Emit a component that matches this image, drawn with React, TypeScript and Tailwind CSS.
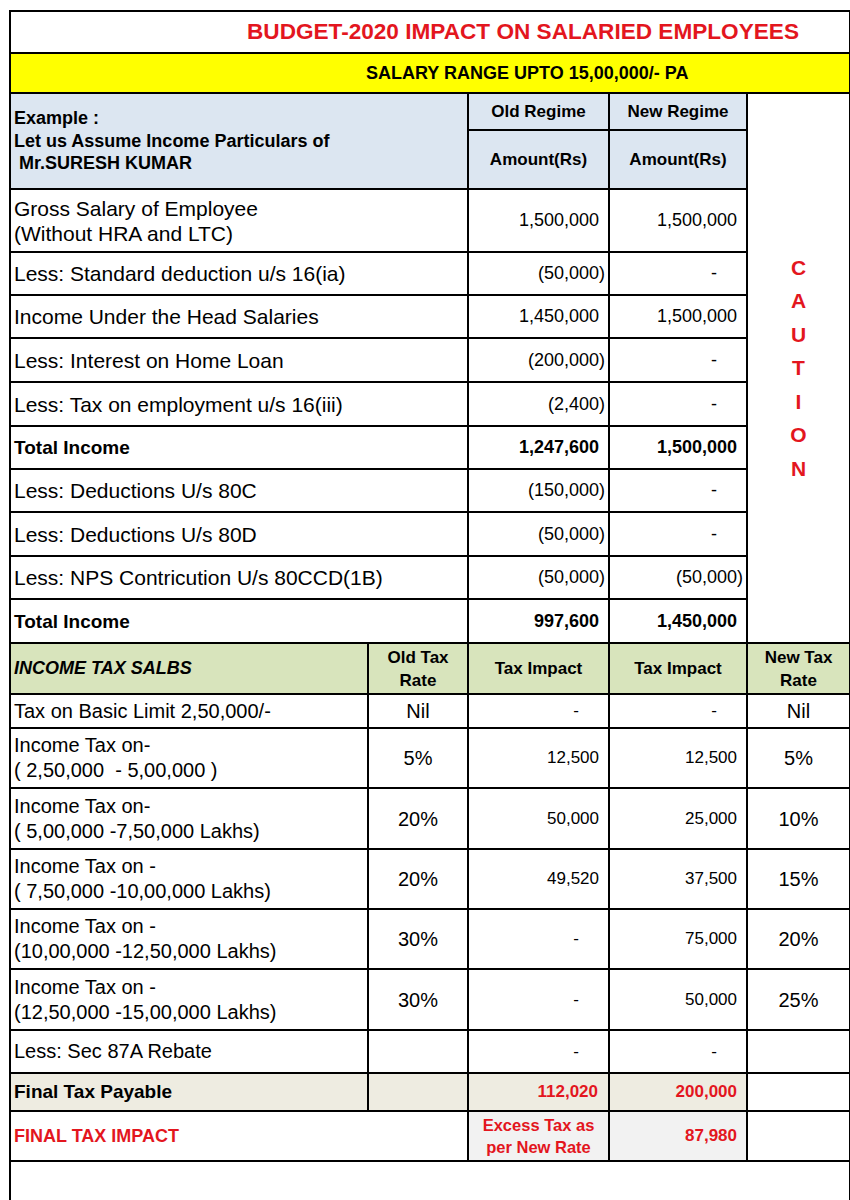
import React from "react";

const RED = "text-[#e3161e]";
const BD = "border-2 border-black";

function Acc({ v, pr = "pr-[9px]", size = "text-[18px]", bold = false, red = false }: { v: string; pr?: string; size?: string; bold?: boolean; red?: boolean }) {
  let content: React.ReactNode;
  if (v === "-") {
    content = <span className="mr-[20px]">-</span>;
  } else if (v.startsWith("(")) {
    content = (
      <>
        {v.slice(0, -1)}
        <span className="inline-block w-0">)</span>
      </>
    );
  } else {
    content = v;
  }
  return (
    <td className={`${BD} text-right align-middle ${pr} ${size} ${bold ? "font-bold" : ""} ${red ? RED : ""} whitespace-nowrap`}>
      {content}
    </td>
  );
}

const sec1 = [
  { label: ["Gross Salary of Employee", "(Without HRA and LTC)"], o: "1,500,000", n: "1,500,000", h: "h-[63px]" },
  { label: ["Less: Standard deduction u/s 16(ia)"], o: "(50,000)", n: "-", h: "h-[43px]" },
  { label: ["Income Under the Head Salaries"], o: "1,450,000", n: "1,500,000", h: "h-[43px]" },
  { label: ["Less: Interest on Home Loan"], o: "(200,000)", n: "-", h: "h-[44px]" },
  { label: ["Less: Tax on employment u/s 16(iii)"], o: "(2,400)", n: "-", h: "h-[44px]" },
  { label: ["Total Income"], o: "1,247,600", n: "1,500,000", bold: true, h: "h-[43px]" },
  { label: ["Less: Deductions U/s 80C"], o: "(150,000)", n: "-", h: "h-[43px]" },
  { label: ["Less: Deductions U/s 80D"], o: "(50,000)", n: "-", h: "h-[44px]" },
  { label: ["Less: NPS Contricution U/s 80CCD(1B)"], o: "(50,000)", n: "(50,000)", h: "h-[43px]" },
  { label: ["Total Income"], o: "997,600", n: "1,450,000", bold: true, h: "h-[44px]" },
];

const sec2 = [
  { label: ["Tax on Basic Limit 2,50,000/-"], old: "Nil", a: "-", b: "-", nw: "Nil", h: "h-[34px]" },
  { label: ["Income Tax on-", "( 2,50,000  - 5,00,000 )"], old: "5%", a: "12,500", b: "12,500", nw: "5%", h: "h-[60px]" },
  { label: ["Income Tax on-", "( 5,00,000 -7,50,000 Lakhs)"], old: "20%", a: "50,000", b: "25,000", nw: "10%", h: "h-[61px]" },
  { label: ["Income Tax on -", "( 7,50,000 -10,00,000 Lakhs)"], old: "20%", a: "49,520", b: "37,500", nw: "15%", h: "h-[60px]" },
  { label: ["Income Tax on -", "(10,00,000 -12,50,000 Lakhs)"], old: "30%", a: "-", b: "75,000", nw: "20%", h: "h-[60px]" },
  { label: ["Income Tax on -", "(12,50,000 -15,00,000 Lakhs)"], old: "30%", a: "-", b: "50,000", nw: "25%", h: "h-[61px]" },
  { label: ["Less: Sec 87A Rebate"], old: "", a: "-", b: "-", nw: "", h: "h-[43px]" },
];

export default function App() {
  return (
    <div className="min-h-[1200px] bg-white pl-[9px] pt-[10px] font-['Liberation_Sans',Arial,sans-serif] text-black">
      <table className="table-fixed border-collapse w-[840px]">
        <colgroup>
          <col className="w-[358px]" />
          <col className="w-[100px]" />
          <col className="w-[141px]" />
          <col className="w-[138px]" />
          <col className="w-[103px]" />
        </colgroup>
        <tbody>
          <tr className="h-[42px]">
            <td colSpan={5} className={`${BD} pl-[236px] text-[22.6px] font-bold ${RED} leading-none whitespace-nowrap`}>
              BUDGET-2020 IMPACT ON SALARIED EMPLOYEES
            </td>
          </tr>
          <tr className="h-[40px]">
            <td colSpan={5} className={`${BD} bg-[#ffff00] pl-[355px] text-[18px] font-bold leading-none whitespace-nowrap`}>
              SALARY RANGE UPTO 15,00,000/- PA
            </td>
          </tr>
          <tr className="h-[37px]">
            <td colSpan={2} rowSpan={2} className={`${BD} bg-[#dce6f1] pl-[3px] text-[18px] font-bold leading-[22.5px] align-middle`}>
              <div>Example :</div>
              <div>Let us Assume Income Particulars of</div>
              <div className="pl-[5px]">Mr.SURESH KUMAR</div>
            </td>
            <td className={`${BD} bg-[#dce6f1] text-center text-[17px] font-bold`}>Old Regime</td>
            <td className={`${BD} bg-[#dce6f1] text-center text-[17px] font-bold`}>New Regime</td>
            <td rowSpan={12} className={`${BD} text-center align-middle`}>
              <div className={`flex flex-col items-center text-[21px] font-bold leading-[33.4px] ${RED}`}>
                {["C", "A", "U", "T", "I", "O", "N"].map((c) => (
                  <div key={c}>{c}</div>
                ))}
              </div>
            </td>
          </tr>
          <tr className="h-[59px]">
            <td className={`${BD} bg-[#dce6f1] text-center text-[17px] font-bold`}>Amount(Rs)</td>
            <td className={`${BD} bg-[#dce6f1] text-center text-[17px] font-bold`}>Amount(Rs)</td>
          </tr>
          {sec1.map((r, i) => (
            <tr key={i} className={r.h}>
              <td colSpan={2} className={`${BD} pl-[3px] align-middle ${r.bold ? "text-[19px] font-bold" : "text-[21px]"} leading-[25px] whitespace-nowrap`}>
                {r.label.map((l) => (
                  <div key={l}>{l}</div>
                ))}
              </td>
              <Acc v={r.o} bold={r.bold} />
              <Acc v={r.n} bold={r.bold} />
            </tr>
          ))}
          <tr className="h-[51px] bg-[#d8e4bc]">
            <td className={`${BD} pl-[3px] text-[18px] font-bold italic`}>INCOME TAX SALBS</td>
            <td className={`${BD} text-center text-[17px] font-bold leading-[23px]`}>
              <div>Old Tax</div>
              <div>Rate</div>
            </td>
            <td className={`${BD} text-center text-[17px] font-bold`}>Tax Impact</td>
            <td className={`${BD} text-center text-[17px] font-bold`}>Tax Impact</td>
            <td className={`${BD} text-center text-[17px] font-bold leading-[23px]`}>
              <div>New Tax</div>
              <div>Rate</div>
            </td>
          </tr>
          {sec2.map((r, i) => (
            <tr key={i} className={r.h}>
              <td className={`${BD} pl-[3px] align-middle text-[20px] leading-[25px] whitespace-pre`}>
                {r.label.map((l) => (
                  <div key={l}>{l}</div>
                ))}
              </td>
              <td className={`${BD} text-center text-[20px]`}>{r.old}</td>
              <Acc v={r.a} size="text-[17px]" />
              <Acc v={r.b} size="text-[17px]" />
              <td className={`${BD} text-center text-[20px]`}>{r.nw}</td>
            </tr>
          ))}
          <tr className="h-[38px]">
            <td className={`${BD} bg-[#eeece1] pl-[3px] text-[19px] font-bold`}>Final Tax Payable</td>
            <td className={`${BD} bg-[#eeece1]`}></td>
            <Acc v="112,020" size="text-[17px]" bold red pr="pr-[10px] bg-[#eeece1]" />
            <Acc v="200,000" size="text-[17px]" bold red pr="pr-[9px] bg-[#eeece1]" />
            <td className={`${BD}`}></td>
          </tr>
          <tr className="h-[50px]">
            <td colSpan={2} className={`${BD} pl-[3px] text-[18px] font-bold ${RED}`}>FINAL TAX IMPACT</td>
            <td className={`${BD} bg-[#f2f2f2] text-center text-[16.5px] font-bold leading-[22px] ${RED}`}>
              <div>Excess Tax as</div>
              <div>per New Rate</div>
            </td>
            <Acc v="87,980" size="text-[17px]" bold red pr="pr-[9px] bg-[#f2f2f2]" />
            <td className={`${BD}`}></td>
          </tr>
          <tr className="h-[80px]">
            <td colSpan={5} className={`${BD}`}></td>
          </tr>
        </tbody>
      </table>
    </div>
  );
}
